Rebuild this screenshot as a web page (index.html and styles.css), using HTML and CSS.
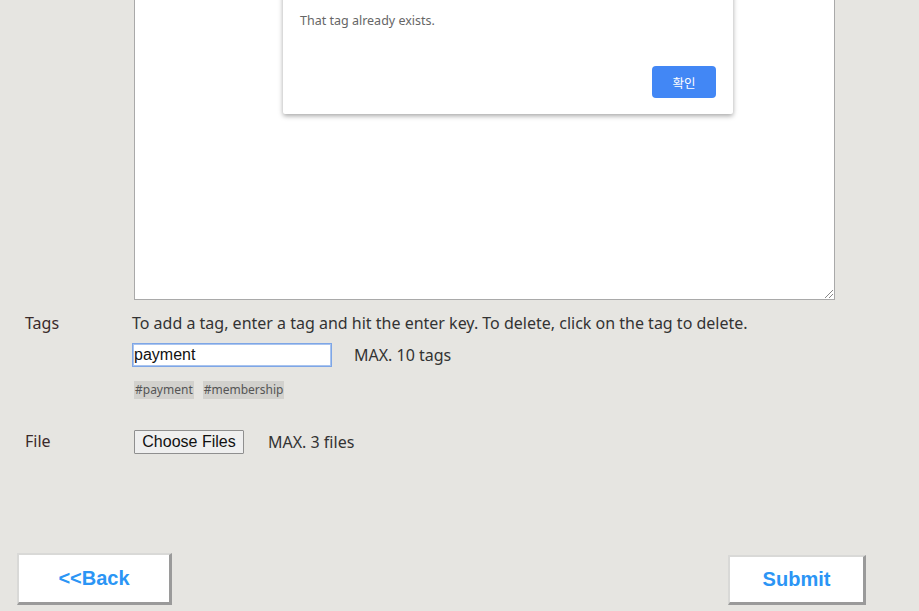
FILE: index.html
```html
<!DOCTYPE html>
<html>
<head>
<meta charset="utf-8">
<link rel="stylesheet" href="styles.css">
</head>
<body>
<div class="page">
  <div class="row editor-row">
    <div class="label"></div>
    <div class="editor"><span class="grip"></span></div>
  </div>

  <div class="row tags-row">
    <div class="label">Tags</div>
    <div class="content">
      <div class="hint">To add a tag, enter a tag and hit the enter key. To delete, click on the tag to delete.</div>
      <div class="inline">
        <input class="tag-input" type="text" value="payment">
        <span class="max">MAX. 10 tags</span>
      </div>
      <div class="chips">
        <span class="chip">#payment</span>
        <span class="chip">#membership</span>
      </div>
    </div>
  </div>

  <div class="row file-row">
    <div class="label">File</div>
    <div class="content inline">
      <button class="file-btn" type="button">Choose Files</button>
      <span class="max">MAX. 3 files</span>
    </div>
  </div>

  <div class="actions">
    <button class="act back" type="button">&lt;&lt;Back</button>
    <button class="act submit" type="button">Submit</button>
  </div>
</div>

<div class="dialog">
  <p class="dialog-msg">That tag already exists.</p>
  <div class="dialog-foot"><button class="ok" type="button">확인</button></div>
</div>
</body>
</html>
```
FILE: styles.css
```css
html, body {
  margin: 0;
  padding: 0;
  background: #e6e5e1;
  overflow: hidden;
}
body {
  font-family: "Noto Sans", "Noto Sans CJK KR", sans-serif;
  color: #333;
  width: 919px;
  height: 611px;
  position: relative;
}
.page {
  display: flex;
  flex-direction: column;
}
.row {
  display: flex;
}
.label {
  width: 134px;
  padding-left: 25px;
  box-sizing: border-box;
  font-size: 16px;
  color: #3a2a2a;
  flex: none;
}
.editor {
  width: 701px;
  height: 302px;
  margin-top: -2px;
  box-sizing: border-box;
  background: #fff;
  border: 1px solid #a9a9a9;
  position: relative;
}
.grip {
  position: absolute;
  right: 1px;
  bottom: 1px;
  width: 8px;
  height: 8px;
  background: linear-gradient(135deg, transparent 0 45%, #888 45% 55%, transparent 55% 70%, #888 70% 80%, transparent 80%);
}
.tags-row {
  margin-top: 12px;
}
.tags-row .label {
  line-height: 22px;
}
.content {
  display: flex;
  flex-direction: column;
  margin-left: -2px;
}
.hint {
  font-size: 16px;
  line-height: 22px;
  color: #333;
}
.inline {
  display: flex;
  align-items: center;
  gap: 22px;
}
.tags-row .inline {
  margin-top: 9px;
}
.tag-input {
  width: 200px;
  height: 24px;
  box-sizing: border-box;
  margin: 0;
  border: 1px solid #7ea6e6;
  outline: 1px solid #a9c4ef;
  outline-offset: -2px;
  padding: 0 1px;
  font-family: "Liberation Sans", Arial, sans-serif;
  font-size: 16px;
  color: #111;
  background: #fff;
}
.max {
  font-size: 16px;
  color: #333;
}
.chips {
  display: flex;
  gap: 9px;
  margin-top: 14px;
  margin-left: 2px;
}
.chip {
  background: #d2d1cd;
  font-size: 12px;
  line-height: 18px;
  color: #555;
  padding: 0 1px;
}
.file-row {
  margin-top: 31px;
  align-items: center;
}
.file-row .label {
  margin-top: -2px;
}
.file-row .content {
  margin-left: 0;
  flex-direction: row;
  gap: 24px;
}
.file-btn {
  width: 110px;
  height: 24px;
  margin: 0;
  padding: 0;
  font-family: "Liberation Sans", Arial, sans-serif;
  font-size: 16px;
  color: #111;
  background: #efefef;
  border: 1px solid #8f8f8f;
  border-radius: 1px;
}
.actions {
  display: flex;
  justify-content: space-between;
  align-items: flex-end;
  margin-top: 99px;
  padding: 0 53px 0 17px;
}
.act {
  background: #fff;
  border-style: solid;
  border-width: 2px 3px 3px 2px;
  border-color: #d9d9d7 #9a9a9a #9a9a9a #d9d9d7;
  font-family: "Liberation Sans", Arial, sans-serif;
  font-weight: bold;
  font-size: 20px;
  color: #2b95f5;
  padding: 0;
  margin: 0;
}
.back {
  width: 155px;
  height: 52px;
}
.submit {
  width: 138px;
  height: 50px;
}
.dialog {
  position: absolute;
  left: 283px;
  top: -60px;
  width: 450px;
  height: 174px;
  box-sizing: border-box;
  background: #fff;
  border-radius: 2px;
  box-shadow: 0 2px 5px rgba(0,0,0,0.35);
  padding: 72px 17px 0 17px;
  display: flex;
  flex-direction: column;
}
.dialog-msg {
  margin: 0;
  font-size: 12.5px;
  line-height: 18px;
  color: #666;
}
.dialog-foot {
  display: flex;
  justify-content: flex-end;
  margin-top: 36px;
}
.ok {
  width: 64px;
  height: 32px;
  background: #4287f5;
  color: #fff;
  border: 0;
  border-radius: 4px;
  font-family: "Noto Sans CJK KR", sans-serif;
  font-size: 12.5px;
  margin: 0;
  padding: 0;
}
```
